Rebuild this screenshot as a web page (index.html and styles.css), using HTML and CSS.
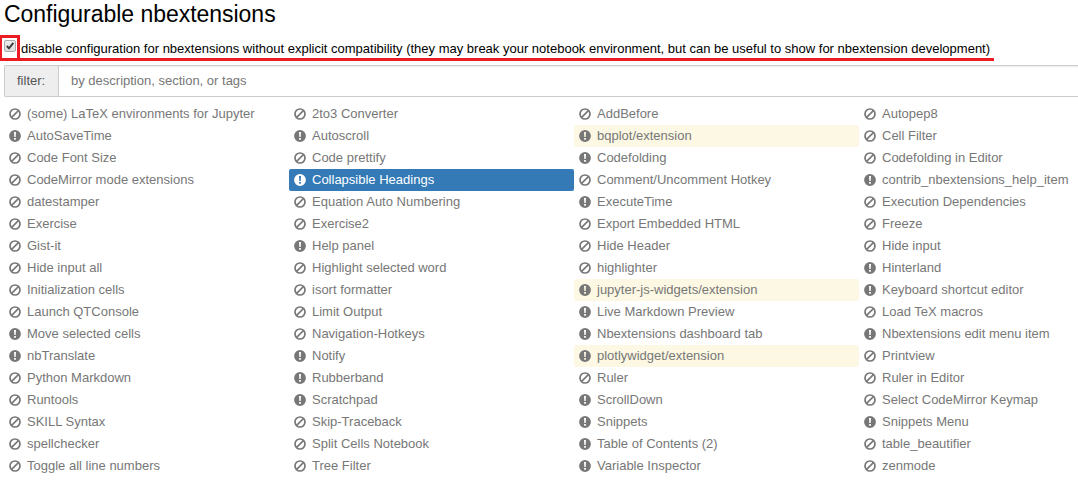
FILE: index.html
```html
<!DOCTYPE html>
<html lang="en">
<head>
<meta charset="utf-8">
<title>Configurable nbextensions</title>
<link rel="stylesheet" href="styles.css">
</head>
<body>
<svg class="defs" aria-hidden="true">
  <symbol id="ban" viewBox="0 0 12 12"><circle cx="6" cy="6" r="5" fill="none" stroke="currentColor" stroke-width="1.7"/><path d="M2.6 9.4 9.4 2.6" stroke="currentColor" stroke-width="1.6"/></symbol>
  <symbol id="warn" viewBox="0 0 12 12"><path fill="currentColor" fill-rule="evenodd" d="M6 .1a5.9 5.9 0 1 1 0 11.8A5.9 5.9 0 0 1 6 .1ZM5 2l.3 5.1h1.4L7 2ZM5.1 8.1v1.7h1.8V8.1Z"/></symbol>
</svg>
<main class="page">
  <h1 class="title">Configurable nbextensions</h1>
  <div class="compat">
    <span class="check"><svg class="tick" viewBox="0 0 12 12"><path d="M2.2 6 4.8 8.8 10 2.2" fill="none" stroke="#3d3d3d" stroke-width="2.4"/></svg></span>
    <span class="compat-text">disable configuration for nbextensions without explicit compatibility (they may break your notebook environment, but can be useful to show for nbextension development)</span>
    <span class="mark-box"></span>
    <span class="mark-line"></span>
  </div>
  <div class="filter"><span class="addon">filter:</span><span class="field">by description, section, or tags</span></div>
  <ul class="list" id="list"></ul>
</main>
<script src="list.js"></script>
</body>
</html>
```
FILE: list.js
```javascript
// "-" = not enabled, "!" = enabled, "?" = possibly incompatible, "*" = selected
const rows = [
  "-(some) LaTeX environments for Jupyter|-2to3 Converter|-AddBefore|-Autopep8",
  "!AutoSaveTime|!Autoscroll|?bqplot/extension|-Cell Filter",
  "-Code Font Size|-Code prettify|!Codefolding|-Codefolding in Editor",
  "-CodeMirror mode extensions|*Collapsible Headings|-Comment/Uncomment Hotkey|!contrib_nbextensions_help_item",
  "-datestamper|-Equation Auto Numbering|!ExecuteTime|-Execution Dependencies",
  "-Exercise|-Exercise2|-Export Embedded HTML|-Freeze",
  "-Gist-it|!Help panel|-Hide Header|-Hide input",
  "-Hide input all|-Highlight selected word|-highlighter|!Hinterland",
  "-Initialization cells|-isort formatter|?jupyter-js-widgets/extension|!Keyboard shortcut editor",
  "-Launch QTConsole|-Limit Output|!Live Markdown Preview|-Load TeX macros",
  "!Move selected cells|-Navigation-Hotkeys|!Nbextensions dashboard tab|!Nbextensions edit menu item",
  "!nbTranslate|!Notify|?plotlywidget/extension|-Printview",
  "-Python Markdown|!Rubberband|-Ruler|-Ruler in Editor",
  "-Runtools|!Scratchpad|!ScrollDown|-Select CodeMirror Keymap",
  "-SKILL Syntax|-Skip-Traceback|!Snippets|!Snippets Menu",
  "-spellchecker|-Split Cells Notebook|!Table of Contents (2)|-table_beautifier",
  "-Toggle all line numbers|-Tree Filter|!Variable Inspector|-zenmode"
];
const state = { "?": " incompatible", "*": " selected" };
document.getElementById("list").innerHTML = rows.flatMap(r => r.split("|")).map(s =>
  `<li class="item${state[s[0]] || ""}"><svg class="icon"><use href="#${s[0] === "-" ? "ban" : "warn"}"/></svg><span class="name">${s.slice(1)}</span></li>`
).join("");
```
FILE: styles.css
```css
body { margin: 0; background: #fff; font: 13px/22px "Liberation Sans", Arial, sans-serif; }
.defs { position: absolute; width: 0; height: 0; }
.page { padding-left: 4px; }
.title { margin: 0; height: 35px; font-size: 23px; font-weight: 400; line-height: 28px; color: #000; letter-spacing: -.03px; white-space: nowrap; }
.compat { position: relative; height: 30px; display: flex; align-items: flex-start; color: #000; line-height: 27px; white-space: nowrap; }
.check { box-sizing: border-box; width: 12px; height: 12px; margin: 5px 5px 0 0; border: 1px solid #a9a9a9; border-radius: 2px; background: linear-gradient(#eee, #ddd); display: flex; }
.tick { width: 10px; height: 10px; }
.mark-box { position: absolute; left: -4px; top: 0; box-sizing: border-box; width: 20px; height: 26px; border: 3px solid #ed1c24; border-left-width: 2px; }
.mark-line { position: absolute; left: -4px; top: 23px; width: 994px; height: 3px; background: #ed1c24; }
.filter { box-sizing: border-box; height: 32px; display: flex; border: 1px solid #ccc; border-right: 0; border-radius: 2px 0 0 2px; line-height: 30px; }
.addon { box-sizing: border-box; width: 54px; padding-left: 12px; background: #eee; border-right: 1px solid #ccc; color: #555; }
.field { flex: 1; padding-left: 12px; color: #777; box-shadow: inset 0 1px 1px rgba(0, 0, 0, .075); }
.list { list-style: none; margin: 6px 0 0; padding: 0; display: grid; grid-template-columns: repeat(3, 285px) 1fr; grid-auto-rows: 22px; }
.item { display: flex; align-items: flex-start; padding-left: 5px; border-radius: 2px; color: #777; white-space: nowrap; }
.icon { width: 12px; height: 12px; margin: 4.5px 6px 0 0; flex: none; }
.incompatible { background: #fcf8e3; }
.selected { background: #337ab7; color: #fff; }
```
